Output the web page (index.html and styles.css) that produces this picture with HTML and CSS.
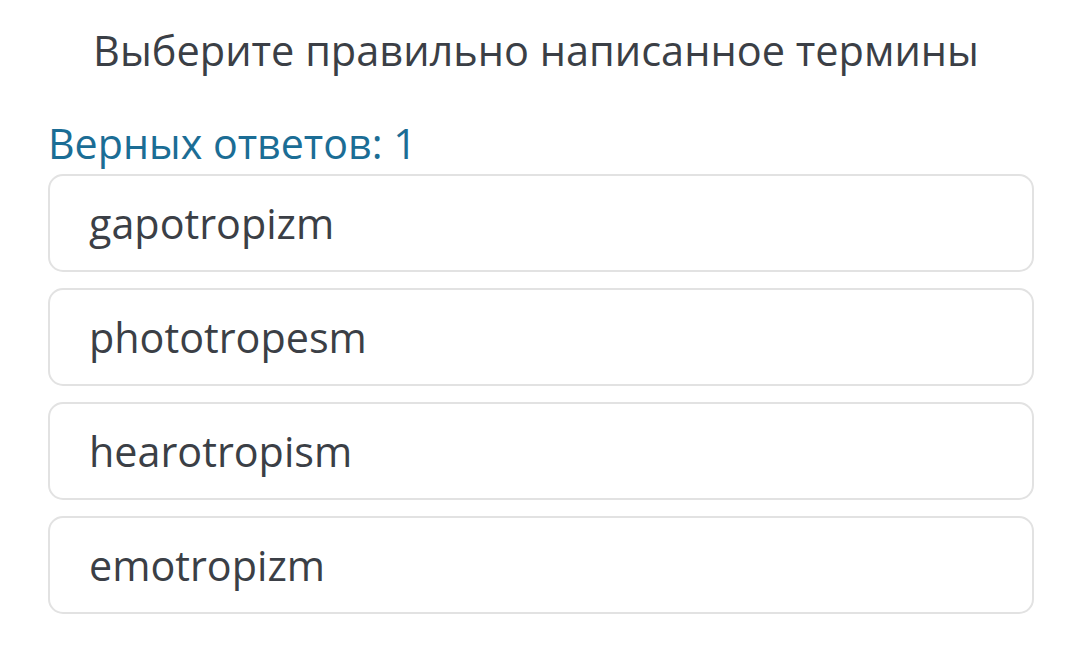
FILE: index.html
```html
<!DOCTYPE html>
<html lang="ru">
<head>
<meta charset="utf-8">
<link rel="stylesheet" href="styles.css">
</head>
<body>
<div class="quiz">
  <div class="question">Выберите правильно написанное термины</div>
  <div class="hint">Верных ответов: 1</div>
  <div class="options">
    <div class="option">gapotropizm</div>
    <div class="option">phototropesm</div>
    <div class="option">hearotropism</div>
    <div class="option">emotropizm</div>
  </div>
</div>
</body>
</html>
```
FILE: styles.css
```css
html, body {
  margin: 0;
  padding: 0;
  background: #ffffff;
}
body {
  font-family: "Open Sans", "Noto Sans", sans-serif;
  color: #3b3f46;
}
.quiz {
  width: 986px;
  margin-left: 48px;
  padding-top: 22px;
}
.question {
  text-align: center;
  padding-right: 10px;
  font-size: 41.5px;
  line-height: 56px;
}
.hint {
  margin-top: 40px;
  color: #1b6d95;
  font-size: 41.2px;
  line-height: 50px;
}
.options {
  display: flex;
  flex-direction: column;
  gap: 16px;
  margin-top: 6px;
}
.option {
  box-sizing: border-box;
  height: 98px;
  border: 2px solid #e2e2e2;
  border-radius: 15px;
  padding: 0 39px;
  font-size: 41.3px;
  line-height: 94px;
}
```
